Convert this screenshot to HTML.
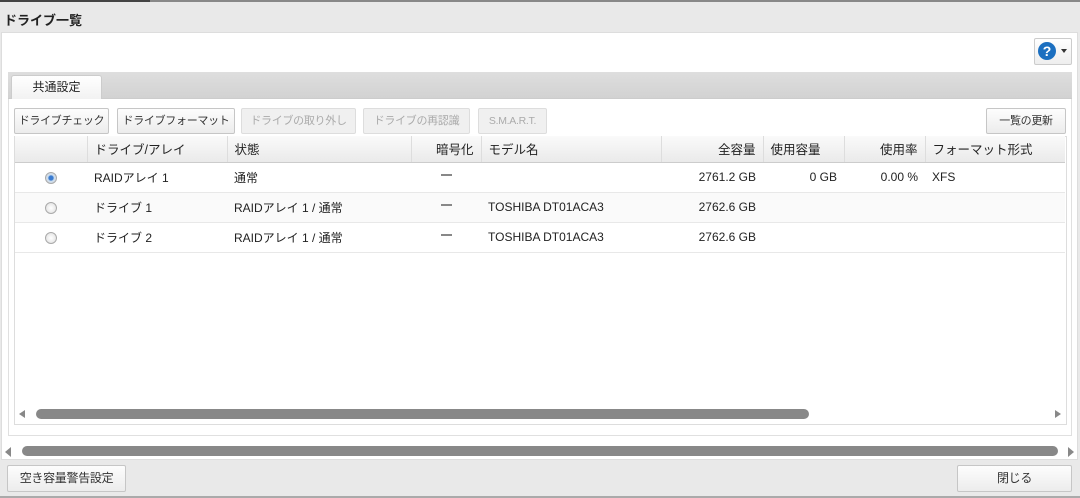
<!DOCTYPE html>
<html><head><meta charset="utf-8"><style>
*{box-sizing:border-box;margin:0;padding:0}
body{width:1080px;height:498px;background:#e9e9e9;font-family:"Liberation Sans","Noto Sans CJK JP",sans-serif;font-size:12px;color:#222;position:relative;overflow:hidden}
.a{position:absolute}
.btn{position:absolute;border:1px solid #c6c6c6;border-radius:2px;background:linear-gradient(#fdfdfd,#ececec);font-size:11px;letter-spacing:-0.3px;color:#333;text-align:center;line-height:24px;height:26px;white-space:nowrap;overflow:hidden}
.dis{color:#aaa;background:#f0f0f0;border-color:#ddd}
table{border-collapse:collapse;position:absolute;left:15px;top:136px;width:1050px;table-layout:fixed}
td,th{height:30px;font-weight:normal;padding:0 7px;text-align:left;white-space:nowrap}
th{height:26px;background:linear-gradient(#fafafa,#eaeaea);border-right:1px solid #ddd;border-bottom:1px solid #ccc;font-size:12.5px}
td{border-bottom:1px solid #e8e8e8;font-size:12px}
.r{text-align:right}
.c{text-align:center}
.rad{display:inline-block;width:12px;height:12px;border-radius:50%;border:1px solid #aaa;background:radial-gradient(#fff,#ddd);vertical-align:middle}
.rad.on{background:radial-gradient(#3a7bd0 30%,#cde 45%,#ddd)}
.dash{display:inline-block;width:11px;height:2px;background:#888;vertical-align:middle;position:relative;top:-3px}
</style></head><body>
<div class="a" style="left:0;top:0;width:1080px;height:2px;background:#888"></div>
<div class="a" style="left:0;top:0;width:150px;height:2px;background:#444"></div>
<div class="a" style="left:4px;top:10px;font-weight:bold;font-size:13px">ドライブ一覧</div>
<div class="a" style="left:1px;top:32px;width:1077px;height:428px;background:#fff;border:1px solid #ddd"></div>
<div class="a" style="left:1034px;top:38px;width:38px;height:27px;border:1px solid #ccc;border-radius:2px;background:linear-gradient(#fff,#eee)"></div>
<div class="a" style="left:1038px;top:42px;width:18px;height:18px;border-radius:50%;background:#1b6fc0;color:#fff;font-weight:bold;font-size:14px;text-align:center;line-height:18px">?</div>
<div class="a" style="left:1061px;top:49px;border-left:3px solid transparent;border-right:3px solid transparent;border-top:4px solid #333"></div>
<div class="a" style="left:8px;top:72px;width:1064px;height:364px;border:1px solid #e0e0e0;background:#fff"></div>
<div class="a" style="left:8px;top:72px;width:1064px;height:27px;background:linear-gradient(#dedede,#d2d2d2);border-bottom:1px solid #ccc"></div>
<div class="a" style="left:11px;top:75px;width:91px;height:24px;background:linear-gradient(#fff,#f2f2f2);border:1px solid #ccc;border-bottom:none;border-radius:3px 3px 0 0;text-align:center;line-height:22px;font-size:12px">共通設定</div>
<div class="btn" style="left:14px;top:108px;width:95px">ドライブチェック</div>
<div class="btn" style="left:117px;top:108px;width:118px">ドライブフォーマット</div>
<div class="btn dis" style="left:241px;top:108px;width:115px">ドライブの取り外し</div>
<div class="btn dis" style="left:363px;top:108px;width:107px">ドライブの再認識</div>
<div class="btn dis" style="left:478px;top:108px;width:69px;font-size:10.5px">S.M.A.R.T.</div>
<div class="btn" style="left:986px;top:108px;width:80px">一覧の更新</div>
<div class="a" style="left:14px;top:136px;width:1053px;height:289px;border:1px solid #ddd"></div>
<table>
<colgroup><col style="width:72px"><col style="width:140px"><col style="width:184px"><col style="width:70px"><col style="width:180px"><col style="width:102px"><col style="width:81px"><col style="width:81px"><col style="width:140px"></colgroup>
<tr><th></th><th>ドライブ/アレイ</th><th>状態</th><th class="r">暗号化</th><th>モデル名</th><th class="r">全容量</th><th>使用容量</th><th class="r">使用率</th><th style="border-right:none">フォーマット形式</th></tr>
<tr><td class="c"><span class="rad on"></span></td><td>RAIDアレイ 1</td><td>通常</td><td class="c"><span class="dash"></span></td><td></td><td class="r">2761.2 GB</td><td class="r">0 GB</td><td class="r">0.00 %</td><td>XFS</td></tr>
<tr style="background:#fafafa"><td class="c"><span class="rad"></span></td><td>ドライブ 1</td><td>RAIDアレイ 1 / 通常</td><td class="c"><span class="dash"></span></td><td>TOSHIBA DT01ACA3</td><td class="r">2762.6 GB</td><td></td><td></td><td></td></tr>
<tr><td class="c"><span class="rad"></span></td><td>ドライブ 2</td><td>RAIDアレイ 1 / 通常</td><td class="c"><span class="dash"></span></td><td>TOSHIBA DT01ACA3</td><td class="r">2762.6 GB</td><td></td><td></td><td></td></tr>
</table>
<div class="a" style="left:19px;top:410px;border-top:4px solid transparent;border-bottom:4px solid transparent;border-right:6px solid #888"></div>
<div class="a" style="left:36px;top:409px;width:773px;height:10px;border-radius:5px;background:#888"></div>
<div class="a" style="left:1055px;top:410px;border-top:4px solid transparent;border-bottom:4px solid transparent;border-left:6px solid #888"></div>
<div class="a" style="left:5px;top:447px;border-top:5px solid transparent;border-bottom:5px solid transparent;border-right:6px solid #888"></div>
<div class="a" style="left:22px;top:446px;width:1036px;height:10px;border-radius:5px;background:#888"></div>
<div class="a" style="left:1068px;top:447px;border-top:5px solid transparent;border-bottom:5px solid transparent;border-left:6px solid #888"></div>
<div class="btn" style="left:7px;top:465px;width:119px;height:27px;line-height:25px;font-size:12px">空き容量警告設定</div>
<div class="btn" style="left:957px;top:465px;width:115px;height:27px;line-height:25px;font-size:12px">閉じる</div>
<div class="a" style="left:0;top:496px;width:1080px;height:2px;background:#aaa"></div>
</body></html>
